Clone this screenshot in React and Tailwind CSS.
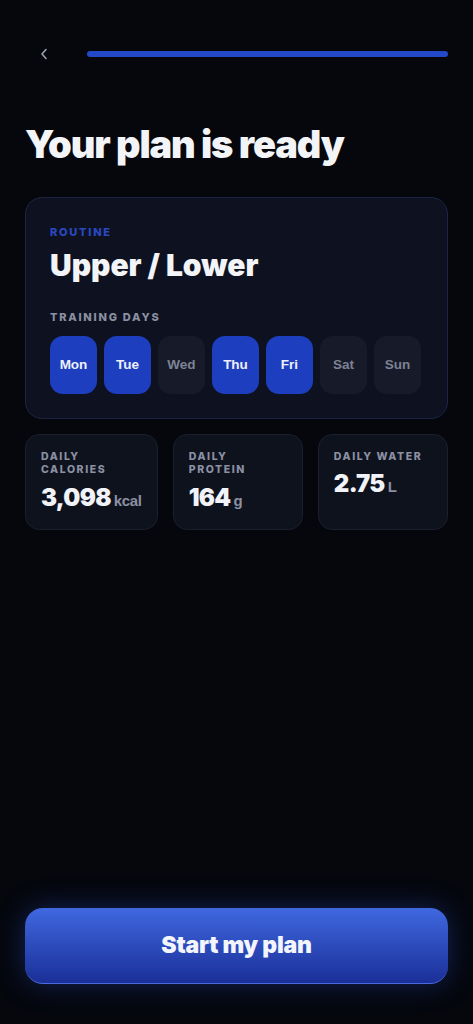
import React from 'react';

const DAYS = [
  { label: 'Mon', active: true },
  { label: 'Tue', active: true },
  { label: 'Wed', active: false },
  { label: 'Thu', active: true },
  { label: 'Fri', active: true },
  { label: 'Sat', active: false },
  { label: 'Sun', active: false },
];

const STATS = [
  { label: ['DAILY', 'CALORIES'], value: '3,098', unit: 'kcal' },
  { label: ['DAILY', 'PROTEIN'], value: '164', unit: 'g' },
  { label: ['DAILY WATER'], value: '2.75', unit: 'L' },
];

const HEAD = { fontFamily: 'Inter, "Liberation Sans", sans-serif' };
const BODY = { fontFamily: '"Liberation Sans", Arial, sans-serif' };

const StatCard = ({ label, value, unit }) => (
  <div className="flex-1 h-[96px] rounded-[14px] border border-[#1a1f2e] bg-[#0e121d] px-[15px] pt-[15px]">
    <div className="text-[10.5px] font-extrabold tracking-[0.15em] leading-[13px] text-[#8b90a2]" style={HEAD}>
      {label.map((l) => (
        <div key={l}>{l}</div>
      ))}
    </div>
    <div className={`flex items-baseline gap-[3px] ${label.length > 1 ? 'mt-[10px]' : 'mt-[9px]'}`}>
      <span className="text-[24px] font-black tracking-[-0.03em] text-[#f1f3f8] leading-none" style={HEAD}>
        {value}
      </span>
      <span className="text-[15px] font-bold text-[#8b90a2] tracking-[-0.02em]" style={BODY}>
        {unit}
      </span>
    </div>
  </div>
);

export default function App() {
  return (
    <div className="min-h-[1024px] w-full bg-[#05070d] flex flex-col px-[25px]">
      <div className="flex items-center h-[22px] mt-[43px]">
        <button type="button" aria-label="Back" className="w-[62px] pl-[15px] text-[#9aa0b2]">
          <svg width="8" height="12" viewBox="0 0 8 12" fill="none">
            <path d="M6 1.5L2 6l4 4.5" stroke="currentColor" strokeWidth="1.6" strokeLinecap="round" strokeLinejoin="round" />
          </svg>
        </button>
        <div className="flex-1 h-[6px] rounded-full bg-[#2449c8]" />
      </div>

      <h1 className="mt-[56px] text-[38px] font-black tracking-[-0.03em] leading-[46px] text-[#f3f4f8]" style={HEAD}>
        Your plan is ready
      </h1>

      <div className="mt-[30px] rounded-[17px] border border-[#1b2444] bg-[#0e1220] px-[24px] pt-[27px] pb-[24px]">
        <div className="text-[11px] font-extrabold tracking-[0.16em] text-[#2a48c0] leading-[14px]" style={HEAD}>
          ROUTINE
        </div>
        <div className="mt-[8px] text-[30px] font-black tracking-[0em] leading-[36px] text-[#f3f4f8]" style={HEAD}>
          Upper / Lower
        </div>
        <div className="mt-[27px] text-[11px] font-extrabold tracking-[0.16em] text-[#8b90a2] leading-[14px]" style={HEAD}>
          TRAINING DAYS
        </div>
        <div className="mt-[12px] flex gap-[7px]">
          {DAYS.map((d) => (
            <div
              key={d.label}
              className={`w-[47px] h-[58px] rounded-[13px] flex items-center justify-center text-[13.5px] font-bold ${
                d.active ? 'bg-[#1d3fbf] text-[#eef1fb]' : 'bg-[#171b29] text-[#7d8294]'
              }`}
              style={BODY}
            >
              {d.label}
            </div>
          ))}
        </div>
      </div>

      <div className="mt-[15px] flex gap-[15px]">
        {STATS.map((s) => (
          <StatCard key={s.value} {...s} />
        ))}
      </div>

      <div className="flex-1" />

      <button
        type="button"
        className="mb-[40px] h-[76px] w-full rounded-[18px] bg-gradient-to-b from-[#4068e0] to-[#1b2f98] border-b border-[#4a6ae0] shadow-[0_0_28px_rgba(45,85,220,0.35)] text-[23px] font-black tracking-[-0.01em] text-[#f3f5fc]"
        style={HEAD}
      >
        Start my plan
      </button>
    </div>
  );
}
